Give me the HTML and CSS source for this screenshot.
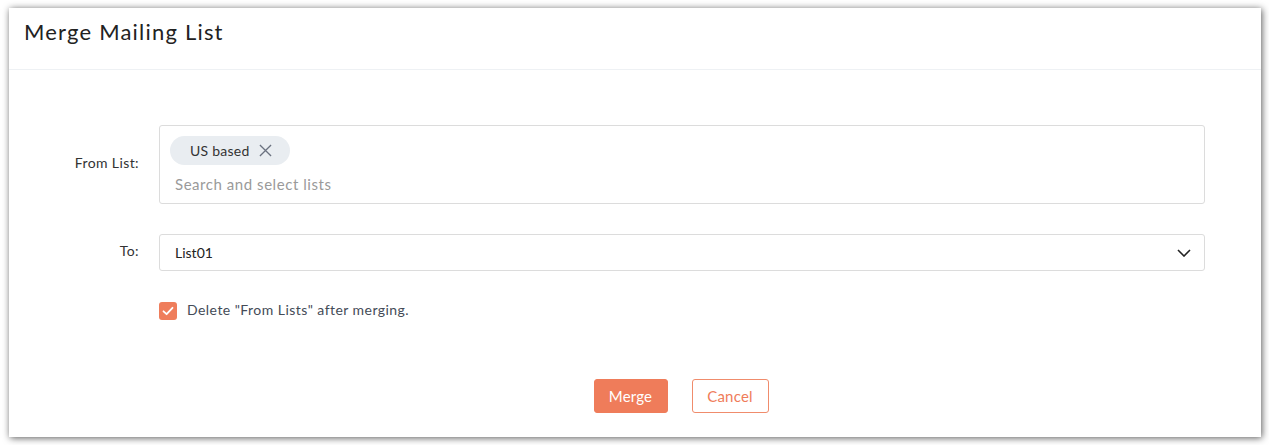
FILE: index.html
```html
<!DOCTYPE html>
<html>
<head>
<meta charset="utf-8">
<link rel="stylesheet" href="styles.css">
</head>
<body>
<div class="dialog">
  <div class="header"><h1 class="title">Merge Mailing List</h1></div>
  <div class="body">
    <div class="row row-from">
      <label class="label">From List:</label>
      <div class="multi">
        <span class="tag">US based
          <svg class="tag-x" viewBox="0 0 14 14" width="13" height="13"><path d="M1 1L13 13M13 1L1 13" stroke="#6b7280" stroke-width="1.4" fill="none"/></svg>
        </span>
        <div class="placeholder">Search and select lists</div>
      </div>
    </div>
    <div class="row row-to">
      <label class="label">To:</label>
      <div class="select">
        <span class="value">List01</span>
        <svg class="chev" viewBox="0 0 14 8" width="14" height="8"><path d="M1 1L7 7L13 1" stroke="#222" stroke-width="1.6" fill="none"/></svg>
      </div>
    </div>
    <div class="check-row">
      <span class="checkbox"><svg viewBox="0 0 18 18" width="18" height="18"><path d="M4.5 9.3L7.6 12.2L13.5 5.8" stroke="#fff" stroke-width="1.8" fill="none" stroke-linecap="round" stroke-linejoin="round"/></svg></span>
      <span class="check-text">Delete "From Lists" after merging.</span>
    </div>
    <div class="actions">
      <button class="btn btn-primary">Merge</button>
      <button class="btn btn-secondary">Cancel</button>
    </div>
  </div>
</div>
</body>
</html>
```
FILE: styles.css
```css
html, body { margin: 0; padding: 0; background: #fff; }
body { font-family: Lato, "Open Sans", sans-serif; color: #333; }
.dialog {
  margin: 8px 8px 8px 9px;
  width: 1252px;
  height: 429px;
  background: #fff;
  box-shadow: 1px 1px 7px rgba(0,0,0,0.65);
  box-sizing: border-box;
}
.header {
  height: 62px;
  border-bottom: 1px solid #eef1f4;
  box-sizing: border-box;
  padding: 10px 0 0 15px;
}
.title { margin: 0; font-size: 22px; font-weight: 400; color: #222; letter-spacing: 1.2px; }
.body { padding-top: 55px; }
.row { display: flex; align-items: center; }
.label { width: 130px; text-align: right; font-size: 14px; color: #333; margin-right: 20px; letter-spacing: 0.4px; padding-bottom: 4px; }
.multi {
  width: 1046px; height: 79px; box-sizing: border-box;
  border: 1px solid #dcdcdc; border-radius: 3px;
  padding: 10px 0 0 10px;
}
.tag {
  display: inline-flex; align-items: center; gap: 9px;
  height: 29px; padding: 0 18px 0 20px; border-radius: 15px;
  background: #e9edf1; font-size: 14px; color: #333; letter-spacing: 0.25px;
}
.tag-x { display: block; }
.placeholder { margin: 10px 0 0 5px; font-size: 15px; color: #9a9a9a; letter-spacing: 0.55px; }
.row-to { margin-top: 30px; }
.select {
  width: 1046px; height: 37px; box-sizing: border-box;
  border: 1px solid #dcdcdc; border-radius: 3px;
  display: flex; align-items: center; justify-content: space-between;
  padding: 0 13px 0 15px; font-size: 14px; color: #222;
}
.chev { display: block; }
.check-row { display: flex; align-items: center; margin: 30px 0 0 150px; }
.checkbox {
  width: 18px; height: 18px; border-radius: 3px; background: #ef7d5b;
  display: block; margin-right: 10px;
}
.checkbox svg { display: block; }
.check-text { font-size: 14px; color: #444b57; letter-spacing: 0.45px; padding-bottom: 2px; }
.actions { display: flex; justify-content: center; gap: 24px; margin-top: 59px; padding-left: 92px; }
.btn {
  height: 34px; border-radius: 3px; font-family: inherit; font-size: 15px;
  box-sizing: border-box; cursor: pointer; letter-spacing: 0.2px;
}
.btn-primary { width: 74px; background: #ef7c5a; border: 1px solid #ef7c5a; color: #fff; }
.btn-secondary { width: 77px; background: #fff; border: 1px solid #f08c6c; color: #ef7c5a; }
```
